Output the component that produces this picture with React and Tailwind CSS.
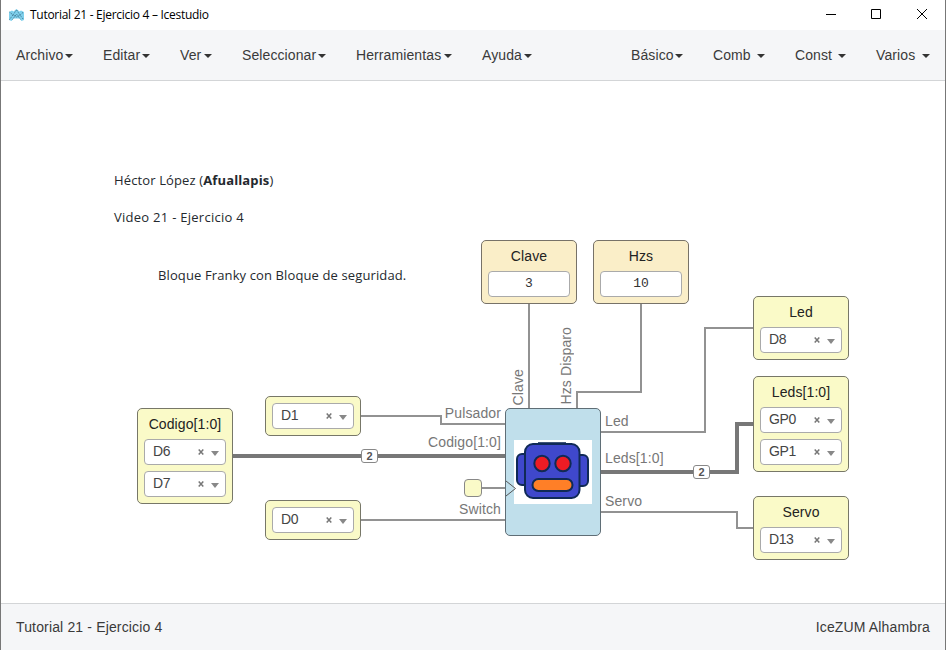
import React from "react";

const leftMenus = [
  ["Archivo", "w-[57px]"],
  ["Editar", "w-[47px]"],
  ["Ver", "w-[32px]"],
  ["Seleccionar", "w-[84px]"],
  ["Herramientas", "w-[96px]"],
  ["Ayuda", "w-[50px]"],
];
const rightMenus = [
  ["Básico", "w-[52px]"],
  ["Comb", "w-[52px]"],
  ["Const", "w-[51px]"],
  ["Varios", "w-[54px]"],
];

function Menu({ label, width }) {
  return (
    <div className={`flex items-center justify-between whitespace-nowrap ${width}`}>
      <span className="tracking-[0.1px]">{label}</span>
      <span className="mt-px h-0 w-0 border-x-4 border-t-4 border-x-transparent border-t-[#333]" />
    </div>
  );
}

function Select({ value }) {
  return (
    <div className="flex h-[26px] w-[82px] items-center rounded-[4px] border border-[#aaa] bg-white pl-2 pr-[6px] text-[14px] leading-[24px] text-[#444]">
      <span className="flex-1 pb-[2px] tracking-[-0.4px]">{value}</span>
      <svg className="mr-[7px] h-[6px] w-[6px]" viewBox="0 0 6 6">
        <path d="M.7.5 5.3 5.5M5.3.5.7 5.5" stroke="#777" strokeWidth="1.5" />
      </svg>
      <span className="mt-[3px] h-0 w-0 border-x-4 border-t-[5px] border-x-transparent border-t-[#888]" />
    </div>
  );
}

function Port({ pos, label, values }) {
  return (
    <div className={`absolute flex w-[96px] flex-col items-center gap-[6px] rounded-[5px] border border-[#777768] bg-[#fafac8] py-[6px] ${pos}`}>
      {label && <div className="h-[18px] text-[14px] leading-[18px] tracking-[0.1px] text-[#222]">{label}</div>}
      {values.map((v) => <Select key={v} value={v} />)}
    </div>
  );
}

function Constant({ pos, label, value }) {
  return (
    <div className={`absolute flex h-[64px] w-[96px] flex-col items-center gap-[6px] rounded-[5px] border border-[#777268] bg-[#faeec8] pt-[6px] ${pos}`}>
      <div className="h-[18px] text-[14px] leading-[18px] tracking-[0.1px] text-[#222]">{label}</div>
      <div className="h-[26px] w-[82px] rounded-[4px] border border-[#aaa] bg-white text-center font-['Liberation_Mono',monospace] text-[13px] leading-[24px] text-[#333]">{value}</div>
    </div>
  );
}

function BusSize({ pos }) {
  return (
    <div className={`absolute h-[14px] w-[17px] rounded-[3px] border border-[#888] bg-white text-center text-[11px] font-bold leading-[12px] text-[#555] ${pos}`}>2</div>
  );
}

function PortLabel({ pos, children }) {
  return <div className={`absolute whitespace-nowrap text-[14px] leading-[16px] tracking-[0.12px] text-[#777] ${pos}`}>{children}</div>;
}

function Robot() {
  return (
    <svg className="absolute left-[8px] top-[31px] h-[64px] w-[78px]" viewBox="0 0 78 64">
      <rect width="78" height="64" fill="#fff" />
      <g stroke="#102a56" strokeWidth="2">
        <rect x="3" y="14" width="16" height="31" rx="5" fill="#3f48cc" />
        <rect x="58" y="15" width="16" height="31" rx="5" fill="#3f48cc" />
        <path d="M24 3.2h28" strokeWidth="2" />
        <rect x="11" y="4" width="54.500" height="54" rx="8" fill="#3f48cc" />
        <circle cx="28" cy="23.500" r="7.700" fill="#ed1c24" />
        <circle cx="49" cy="23.500" r="7.700" fill="#ed1c24" />
        <rect x="18.500" y="39" width="40" height="12" rx="6" fill="#ff7f27" />
      </g>
    </svg>
  );
}

function Logo() {
  return (
    <svg className="h-[13px] w-[15px]" viewBox="0 0 15 13">
      <path d="M0 3 3 1.500 4.500 2.500 7.500 0 10.500 2.500 12 1.500 15 3V11L12.500 12 10.500 9.500H4.500L2.500 12 0 11Z" fill="#7fd0ec" />
      <path d="M.5 3 4 6 7.500 .8 11 6 14.500 3M.5 10.500 4 6 7.500 8 11 6 14.500 10.500M3.500 10.500 7.500 5 11.500 10.500" fill="none" stroke="#28566f" strokeWidth=".7" strokeDasharray="1.200 1" />
    </svg>
  );
}

export default function App() {
  return (
    <div className="flex h-[650px] w-[946px] flex-col overflow-hidden border-x border-[#777] bg-white font-['Liberation_Sans',Arial,sans-serif] text-[14px] text-[#3a3a3a]">
      <header className="flex h-[30px] shrink-0 items-center bg-white pl-[8px] pr-[16px] text-black">
        <Logo />
        <span className="ml-[6px] font-['Open_Sans','Noto_Sans',sans-serif] text-[12px] leading-[20px] tracking-[-0.28px]">Tutorial 21 - Ejercicio 4 – Icestudio</span>
        <svg className="ml-auto h-[12px] w-[104px]" viewBox="0 0 104 12" fill="none" stroke="#000">
          <path d="M1 5.500h10" />
          <path d="M46.500 .5h9v9h-9Z" />
          <path d="m92 0 10 10M102 0 92 10" />
        </svg>
      </header>
      <nav className="flex h-[51px] shrink-0 items-center justify-between border-b border-[#d3d5d7] bg-[#f5f6f8] px-[15px]">
        <div className="flex gap-[30px]">{leftMenus.map(([l, w]) => <Menu key={l} label={l} width={w} />)}</div>
        <div className="flex gap-[30px]">{rightMenus.map(([l, w]) => <Menu key={l} label={l} width={w} />)}</div>
      </nav>
      <main className="relative h-[522px] shrink-0 bg-white">
        <div className="absolute left-[113px] top-[89px] whitespace-nowrap font-['Open_Sans','Noto_Sans',sans-serif] text-[13px] leading-[20px] text-[#24292e]">
          <p className="tracking-[0.13px]">Héctor López (<b>Afuallapis</b>)</p>
          <p className="mt-[17px] tracking-[0.27px]">Video 21 - Ejercicio 4</p>
        </div>
        <p className="absolute left-[157px] top-[184px] whitespace-nowrap font-['Open_Sans','Noto_Sans',sans-serif] text-[13px] leading-[20px] tracking-[0.12px] text-[#24292e]">Bloque Franky con Bloque de seguridad.</p>

        <svg className="absolute left-0 top-0 h-[522px] w-[944px]" viewBox="1 81 944 522" fill="none">
          <g stroke="#777" strokeOpacity=".8" strokeWidth="2">
            <path d="M361 416h80v8h65M361 520h145M481 488h26" />
            <path d="M529 303v106M641 303v89h-64v17" />
            <path d="M600 432h105V328h49M600 512h137v16h17" />
          </g>
          <path d="M232 456h274M600 472h137v-48h17" stroke="#777" strokeWidth="4" />
        </svg>

        <Constant pos="left-[480px] top-[159px]" label="Clave" value="3" />
        <Constant pos="left-[592px] top-[159px]" label="Hzs" value="10" />
        <Port pos="left-[136px] top-[327px]" label="Codigo[1:0]" values={["D6", "D7"]} />
        <Port pos="left-[264px] top-[315px]" values={["D1"]} />
        <Port pos="left-[264px] top-[419px]" values={["D0"]} />
        <Port pos="left-[752px] top-[215px]" label="Led" values={["D8"]} />
        <Port pos="left-[752px] top-[295px]" label="Leds[1:0]" values={["GP0", "GP1"]} />
        <Port pos="left-[752px] top-[415px]" label="Servo" values={["D13"]} />
        <BusSize pos="left-[360px] top-[368px]" />
        <BusSize pos="left-[692px] top-[384px]" />
        <div className="absolute left-[463px] top-[398px] h-[18px] w-[18px] rounded-[4px] border border-[#888] bg-[#fafac8]" />

        <div className="absolute left-[504px] top-[327px] h-[128px] w-[96px] rounded-[5px] border border-[#5f6e76] bg-[#c0dfeb]">
          <Robot />
          <svg className="absolute left-0 top-[71px] h-[17px] w-[11px]" viewBox="0 0 11 17">
            <path d="M0 1 9.500 8.500 0 16" fill="none" stroke="#555" />
          </svg>
        </div>

        <PortLabel pos="right-[444px] top-[324px]">Pulsador</PortLabel>
        <PortLabel pos="right-[444px] top-[353px]">Codigo[1:0]</PortLabel>
        <PortLabel pos="right-[444px] top-[420px]">Switch</PortLabel>
        <PortLabel pos="left-[604px] top-[332px]">Led</PortLabel>
        <PortLabel pos="left-[604px] top-[369px]">Leds[1:0]</PortLabel>
        <PortLabel pos="left-[604px] top-[412px]">Servo</PortLabel>
        <PortLabel pos="bottom-[198px] left-[509px] rotate-180 [writing-mode:vertical-rl]">Clave</PortLabel>
        <PortLabel pos="bottom-[198px] left-[557px] rotate-180 [writing-mode:vertical-rl]">Hzs Disparo</PortLabel>
      </main>
      <footer className="flex h-[47px] shrink-0 items-center justify-between border-t border-[#d3d5d7] bg-[#f5f6f8] px-[15px] tracking-[0.15px]">
        <span>Tutorial 21 - Ejercicio 4</span>
        <span>IceZUM Alhambra</span>
      </footer>
    </div>
  );
}
